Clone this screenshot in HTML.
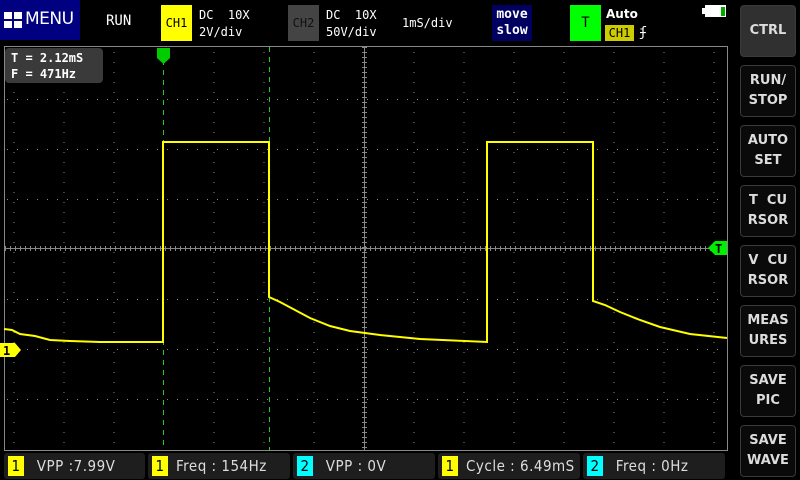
<!DOCTYPE html>
<html><head><meta charset="utf-8"><style>
*{margin:0;padding:0;box-sizing:border-box}
body{width:800px;height:480px;background:#000;overflow:hidden;position:relative;font-family:"DejaVu Sans Mono","Liberation Mono",monospace;color:#fff}
.a{position:absolute}
.btn{position:absolute;left:740px;width:56px;height:52px;border:1px solid #3a3a3a;border-radius:4px;background:#0a0a0a;color:#ddd;font:bold 13px "DejaVu Sans",sans-serif;text-align:center;display:flex;align-items:center;justify-content:center;line-height:20px}
.m{position:absolute;top:453px;height:26px;background:#1e1e1e;border-radius:3px;font:15px "Liberation Sans Narrow","DejaVu Sans Condensed",sans-serif;color:#ddd;display:flex;align-items:center;letter-spacing:0.5px}
.b{width:16px;height:20px;margin:0 8px 0 4px;color:#000;text-align:center;line-height:20px;font-size:15px}
</style></head><body>
<div class="a" style="left:0;top:0;width:80px;height:40px;background:#000080"></div>
<svg class="a" style="left:4px;top:12px" width="20" height="17"><rect x="0" y="0" width="8" height="7" fill="#fff"/><rect x="10" y="0" width="8" height="7" fill="#fff"/><rect x="0" y="9" width="8" height="7" fill="#fff"/><rect x="10" y="9" width="8" height="7" fill="#fff"/></svg>
<div class="a" style="left:25px;top:9px;font:17px 'DejaVu Sans',sans-serif;letter-spacing:-0.5px">MENU</div>
<div class="a" style="left:106px;top:13px;font-size:14px">RUN</div>
<div class="a" style="left:161px;top:5px;width:31px;height:36px;background:#ff0;color:#000;font-size:12px;text-align:center;line-height:36px">CH1</div>
<div class="a" style="left:199px;top:7px;font-size:12px;line-height:17px">DC&nbsp;&nbsp;10X<br>2V/div</div>
<div class="a" style="left:288px;top:5px;width:31px;height:36px;background:#444;color:#111;font-size:12px;text-align:center;line-height:36px">CH2</div>
<div class="a" style="left:326px;top:7px;font-size:12px;line-height:17px">DC&nbsp;&nbsp;10X<br>50V/div</div>
<div class="a" style="left:402px;top:16px;font-size:12px">1mS/div</div>
<div class="a" style="left:492px;top:5px;width:40px;height:36px;background:#000060;font:bold 13px 'DejaVu Sans Mono',monospace;text-align:center;line-height:16px;padding-top:2px">move<br>slow</div>
<div class="a" style="left:570px;top:5px;width:31px;height:36px;background:#0f0;color:#000;font-size:14px;text-align:center;line-height:36px">T</div>
<div class="a" style="left:606px;top:7px;font:bold 12px 'DejaVu Sans',sans-serif">Auto</div>
<div class="a" style="left:605px;top:25px;width:29px;height:16px;background:#cc0;color:#000;font-size:12px;text-align:center;line-height:16px">CH1</div>
<div class="a" style="left:639px;top:25px;font-size:13px">ʄ</div>
<div class="a" style="left:702px;top:8px;width:3px;height:6px;background:#fff"></div>
<div class="a" style="left:705px;top:5px;width:21px;height:12px;background:#fff"></div>
<div class="a" style="left:721px;top:7px;width:4px;height:9px;background:#0a0"></div>
<svg class="a" style="left:0;top:0" width="735" height="452">
<rect x="4.5" y="46.5" width="723" height="404" fill="none" stroke="#888"/>
<g stroke="#888" stroke-width="1" stroke-dasharray="1 9">
<path d="M14 52V450M64 52V450M114 52V450M214 52V450M264 52V450M314 52V450M414 52V450M464 52V450M514 52V450M564 52V450M614 52V450M664 52V450M714 52V450"/>
<path d="M6 99.5H727M6 149.5H727M6 199.5H727M6 299.5H727M6 349.5H727M6 399.5H727" stroke-dashoffset="-1"/>
</g>
<path d="M364.5 47V450M5 248.5H727" stroke="#888"/>
<path d="M5 248.5H727" stroke="#888" stroke-width="5" stroke-dasharray="1 4"/>
<path d="M364.5 47V450" stroke="#888" stroke-width="5" stroke-dasharray="1 4"/>
<path d="M163.5 60V450M269.5 47V450" stroke="#2c2" stroke-dasharray="5 5"/>
<path d="M4 329 L12 330 L20 334 L35 336 L50 340 L70 341 L100 342 L163 342 L163 142 L269 142 L269 297 L280 302 L295 310 L310 318 L330 326 L350 331 L380 335 L420 339 L487 342 L487 142 L593 142 L593 301 L605 305 L620 312 L640 320 L660 327 L690 334 L727 338" fill="none" stroke="#ff0" stroke-width="2"/>
<path d="M157 48H170V58L163.5 64L157 58Z" fill="#0c0"/>
<path d="M0 343H15L21 350L15 357H0Z" fill="#ff0"/>
<text x="3" y="355" font-size="12" font-family="DejaVu Sans Mono" font-weight="bold">1</text>
<path d="M708 248L715 241H727V255H715Z" fill="#0e0"/>
<text x="715" y="253" font-size="12" font-family="DejaVu Sans Mono" font-weight="bold">T</text>
</svg>
<div class="a" style="left:5px;top:48px;width:98px;height:35px;background:#3a3a3a;border-radius:4px;font:bold 12px 'DejaVu Sans Mono',monospace;padding:2px 0 0 6px;line-height:16px">T = 2.12mS<br>F = 471Hz</div>
<div class="btn" style="top:5px;background:#303030">CTRL</div>
<div class="btn" style="top:65px">RUN/<br>STOP</div>
<div class="btn" style="top:125px">AUTO<br>SET</div>
<div class="btn" style="top:185px">T&nbsp;&nbsp;CU<br>RSOR</div>
<div class="btn" style="top:245px">V&nbsp;&nbsp;CU<br>RSOR</div>
<div class="btn" style="top:305px">MEAS<br>URES</div>
<div class="btn" style="top:365px">SAVE<br>PIC</div>
<div class="btn" style="top:425px">SAVE<br>WAVE</div>
<div class="m" style="left:4px;width:141px"><span class="b" style="background:#ff0">1</span>&nbsp;VPP :7.99V</div>
<div class="m" style="left:148px;width:142px"><span class="b" style="background:#ff0">1</span>Freq : 154Hz</div>
<div class="m" style="left:293px;width:142px"><span class="b" style="background:#0ff">2</span>&nbsp;VPP : 0V</div>
<div class="m" style="left:438px;width:142px"><span class="b" style="background:#ff0">1</span>Cycle : 6.49mS</div>
<div class="m" style="left:583px;width:142px"><span class="b" style="background:#0ff">2</span>&nbsp;Freq : 0Hz</div>
</body></html>
